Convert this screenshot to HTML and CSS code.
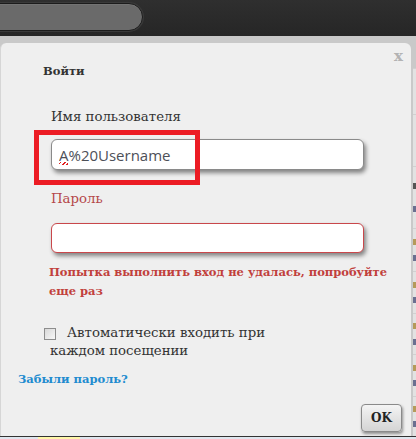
FILE: index.html
```html
<!DOCTYPE html>
<html lang="ru">
<head>
<meta charset="utf-8">
<title>Войти</title>
<link rel="stylesheet" href="styles.css">
</head>
<body>
<div class="topbar">
  <div class="search"></div>
</div>
<div class="page">
  <div class="dialog">
    <div class="dlg-head">
      <span class="title">Войти</span>
      <span class="close">x</span>
    </div>
    <form class="form">
      <label class="label">Имя пользователя</label>
      <div class="field-wrap">
        <input class="input" type="text" value="A%20Username" spellcheck="false">
        <span class="squiggle"></span>
        <span class="highlight"></span>
      </div>
      <label class="label label-err">Пароль</label>
      <input class="input input-err" type="password">
      <p class="error">Попытка выполнить вход не удалась, попробуйте еще раз</p>
      <div class="remember">
        <div class="rem-line"><span class="checkbox"></span><span class="rem-text">Автоматически входить при</span></div>
        <div class="rem-line2">каждом посещении</div>
      </div>
    </form>
    <a class="forgot" href="#">Забыли пароль?</a>
    <div class="actions">
      <button class="ok" type="button">OK</button>
    </div>
  </div>
  <div class="side">
    <div class="side-row r25"></div>
    <div class="side-row r46"></div>
    <div class="side-row r52"></div>
    <div class="side-row r62"><i class="m dark"></i><i class="m blue"></i></div>
    <div class="side-row r43"><i class="m tan"></i><i class="m blue"></i></div>
    <div class="side-row r42"><i class="m tan"></i><i class="m blue"></i></div>
    <div class="side-row r41"><i class="m tan"></i><i class="m blue"></i></div>
    <div class="side-row r42"><i class="m tan"></i><i class="m blue"></i></div>
    <div class="side-row r40"><i class="m tan"></i><i class="m blue"></i></div>
  </div>
</div>
<div class="bottom">
  <span class="b1"></span><span class="b2"></span><span class="b3"></span>
</div>
</body>
</html>
```
FILE: styles.css
```css
* { box-sizing: border-box; }
html, body { margin: 0; padding: 0; }
body {
  width: 416px;
  height: 439px;
  overflow: hidden;
  background: #cacaca;
  font-family: "DejaVu Serif", Georgia, serif;
  color: #333;
}
.topbar {
  height: 36px;
  background: linear-gradient(#2f2f2f, #262626);
  display: flex;
  align-items: flex-start;
  padding-top: 3px;
}
.search {
  width: 163px;
  height: 28px;
  margin-left: -20px;
  background: #6a6a6a;
  border: 1px solid #1c1c1c;
  border-radius: 14px;
  box-shadow: 0 0 0 1px #3a3a3a, inset 0 1px 0 #737373;
}
.page {
  display: flex;
  height: 400px;
  padding-top: 7px;
  background: #c9c9c9;
}
.dialog {
  width: 411px;
  height: 393px;
  background: #efefef;
  border-left: 1px solid #d6d6d6;
  border-radius: 6px 6px 0 0;
  display: flex;
  flex-direction: column;
}
.dlg-head {
  display: flex;
  justify-content: space-between;
  align-items: flex-start;
  padding: 6px 8px 0 42px;
}
.title {
  font-weight: bold;
  font-size: 11.5px;
  line-height: 14px;
  margin-top: 15px;
  color: #333;
}
.close {
  font-weight: bold;
  font-size: 15px;
  line-height: 15px;
  color: #b3b3b3;
}
.form {
  display: flex;
  flex-direction: column;
  align-items: flex-start;
  padding-left: 50px;
  margin: 0;
}
.label {
  font-size: 13.3px;
  line-height: 20px;
  color: #333;
  margin-top: 29px;
}
.label-err { color: #b5474a; margin-top: 19px; }
.field-wrap { position: relative; width: 313px; margin-top: 12px; }
.input {
  width: 313px;
  height: 31px;
  border: 1px solid #8a8a8a;
  border-radius: 6px;
  background: #fff;
  box-shadow: 2px 3px 4px rgba(0,0,0,0.45);
  font-family: "Open Sans", "Noto Sans", sans-serif;
  font-size: 15px;
  color: #4d5058;
  padding: 0 7px;
  outline: none;
  display: block;
}
.input-err { border-color: #c9474b; margin-top: 14px; height: 30px; }
.squiggle {
  position: absolute;
  left: 8px;
  top: 23px;
  width: 9px;
  height: 3px;
  background: repeating-linear-gradient(135deg, transparent 0 1px, #e02020 1px 2px, transparent 2px 3px);
}
.highlight {
  position: absolute;
  left: -17px;
  top: -9px;
  width: 166px;
  height: 55px;
  border: 5px solid #ec1c24;
}
.error {
  margin: 10px 0 0 -2px;
  font-weight: bold;
  font-size: 11.5px;
  line-height: 19px;
  color: #c1403c;
  width: 345px;
}
.remember {
  margin: 23px 0 0 -7px;
  display: flex;
  flex-direction: column;
  font-size: 13.3px;
  line-height: 18px;
  color: #333;
}
.rem-line {
  display: flex;
  align-items: center;
  gap: 11px;
}
.rem-line2 { padding-left: 6px; }
.checkbox {
  flex: none;
  width: 12px;
  height: 12px;
  margin-top: 1px;
  border: 1px solid #8d8d8d;
  background: linear-gradient(135deg, #d8d8d8, #f8f8f8);
}
.forgot {
  align-self: flex-start;
  margin: 11px 0 0 17px;
  font-weight: bold;
  font-size: 11.5px;
  line-height: 16px;
  color: #218bcf;
  text-decoration: none;
}
.actions {
  margin-top: auto;
  display: flex;
  justify-content: flex-end;
  padding: 0 9px 4px 0;
}
.ok {
  width: 41px;
  height: 28px;
  border: 1px solid #8a8a8a;
  border-radius: 4px;
  background: linear-gradient(#f4f4f4, #d4d4d4);
  box-shadow: 1px 2px 3px rgba(0,0,0,0.4);
  font-family: "DejaVu Serif", Georgia, serif;
  font-weight: bold;
  font-size: 12px;
  color: #222;
  padding: 0;
}
.side {
  flex: 1;
  display: flex;
  flex-direction: column;
  padding-left: 2px;
}
.side-row {
  border-top: 1px solid #d0d0d0;
  background: #e2e2e2;
  display: flex;
  flex-direction: column;
  justify-content: space-evenly;
}
.r25 { height: 25px; border-top: 0; background: #c9c9c9; }
.r46 { height: 46px; }
.r52 { height: 52px; }
.r62 { height: 62px; }
.r43 { height: 43px; }
.r42 { height: 42px; }
.r41 { height: 41px; }
.r40 { height: 40px; }
.m { display: block; width: 3px; height: 6px; }
.m.dark { background: #555; }
.m.tan { background: #b59a5a; }
.m.blue { background: #6a6f90; }
.bottom {
  height: 3px;
  border-top: 1px solid #333;
  background: #dfe6ee;
  display: flex;
}
.b1 { width: 38px; }
.b2 { width: 42px; background: #fff7a8; }
.b3 { flex: 1; }
```
